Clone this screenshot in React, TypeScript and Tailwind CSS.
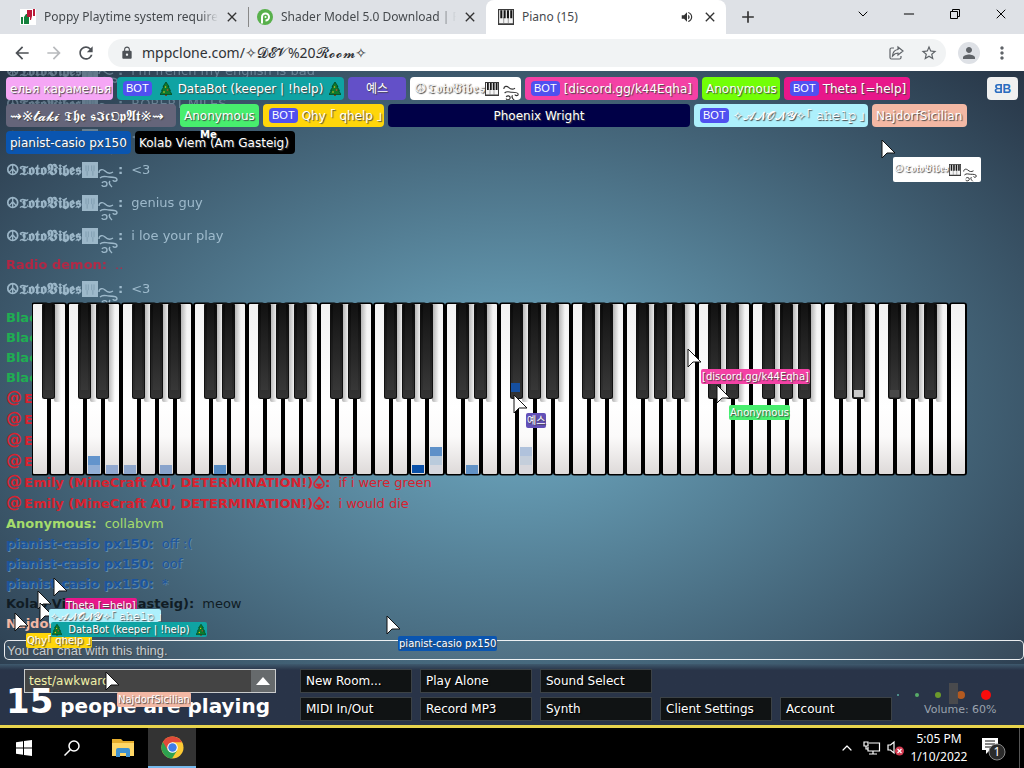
import React from "react";
import {
  MdArrowBack, MdArrowForward, MdRefresh, MdLock, MdStarBorder, MdPerson, MdMoreVert, MdVolumeUp, MdClose, MdAdd,
} from "react-icons/md";
import { ChevronDown, ChevronUp, Minus, X } from "lucide-react";

const shadow = "[text-shadow:1px_1px_1px_#444]";

function Tree({ className }: { className: string }) {
  return (
    <svg viewBox="0 0 12 14" className={className} aria-hidden="true">
      <path d="M5 12h2v2H5z" fill="#7a4318" />
      <path d="M6 0 9 4.500 8 4.500 10.500 8.500 9.500 8.500 12 12.500H0L2.500 8.500h-1L4 4.500H3z" fill="#0d7a2c" stroke="#053d17" strokeWidth=".7" />
      <circle cx="5.500" cy="5" r=".8" fill="#f2c418" />
      <circle cx="7.500" cy="8" r=".8" fill="#e43e2b" />
      <circle cx="4" cy="10" r=".8" fill="#f2c418" />
    </svg>
  );
}

function MiniPiano({ className, soft }: { className: string; soft?: boolean }) {
  return soft ? (
    <svg viewBox="0 0 14 14" className={className} aria-hidden="true">
      <path d="M0 0h14v14H0z" fill="#b4cfe0" />
      <path d="M3.500 3v5M5.500 3v5M8.500 3v5M10.500 3v5M4.500 8v4M9.500 8v4" stroke="#8fadc0" strokeWidth=".8" />
    </svg>
  ) : (
    <svg viewBox="0 0 14 14" className={className} aria-hidden="true">
      <rect width="14" height="14" fill="#3a3a3a" />
      <path d="M1 1h12v11.500H1z" fill="#f4f4f4" />
      <path d="M5 7v6M9 7v6" stroke="#777" strokeWidth=".6" />
      <path d="M2 1h1.800v7H2zM4.900 1h1.800v7H4.900zM7.800 1h1.800v7H7.800zM10.700 1h1.800v7h-1.800z" fill="#161616" />
    </svg>
  );
}

function Flourish({ className }: { className: string }) {
  return (
    <svg viewBox="0 0 20 20" className={className} fill="none" stroke="currentColor" strokeWidth="1.400" aria-hidden="true">
      <path d="M1 5c0-4 4-4 6-2 2 2 5 3 8 1M2 10c3-3 6-1 9-1 4 0 8 0 8 2.500s-4 2-4 .5M4 15c1-2 5-2 5 1s-5 3-5 1M12 13c-2 2 0 4 2 6" />
    </svg>
  );
}

function Vibes() {
  return (
    <span className="inline-flex items-center text-[#f4f4f4]">
      <span className="font-serif text-sm">☮𝕿𝖔𝖙𝖔𝖁𝖎𝖇𝖊𝖘</span>
      <MiniPiano className="size-3.5" />
      <Flourish className="mt-2 ml-1 size-4 text-[#333]" />
    </span>
  );
}

function VibesTag() {
  return (
    <span className="inline-flex items-center">
      <span className="font-serif text-[11px]">☮𝕿𝖔𝖙𝖔𝖁𝖎𝖇𝖊𝖘</span>
      <MiniPiano className="size-3" />
      <Flourish className="mt-2.5 ml-0.5 size-3.5 text-[#333]" />
    </span>
  );
}

function VibesChat() {
  return (
    <span className="inline-flex h-5 items-start align-top">
      <span className="font-serif text-[15px] leading-5">☮𝕿𝖔𝖙𝖔𝖁𝖎𝖇𝖊𝖘</span>
      <MiniPiano soft className="mt-0.5 size-4" />
      <Flourish className="mt-2 size-5" />
    </span>
  );
}

function Bot() {
  return (
    <span className="mr-0.5 ml-0.5 inline-block rounded-sm bg-[#5050f0] px-[3px] font-['Liberation_Sans',sans-serif] text-[11px] leading-[15px] [text-shadow:none]">
      BOT
    </span>
  );
}

const people: { look: string; bot?: boolean; name: React.ReactNode }[] = [
  { look: "w-[107px] bg-[#f5a6f5]", name: "елья карамелья" },
  {
    look: "w-[227px] bg-[#0fa3a3]", bot: true,
    name: <span className="flex items-center gap-1.5 pl-1"><Tree className="h-3.5 w-3" />DataBot (keeper | !help)<Tree className="h-3.5 w-3" /></span>,
  },
  { look: "w-[58px] bg-[#6350c8] justify-center", name: "예스" },
  { look: "w-[111px] bg-white", name: <Vibes /> },
  { look: "w-[173px] bg-[#f441a5]", bot: true, name: "[discord.gg/k44Eqha]" },
  { look: "w-[78px] bg-[#72ff06]", name: "Anonymous" },
  { look: "w-[126px] bg-[#e8178a]", bot: true, name: "Theta [=help]" },
  { look: "w-[170px] bg-[#65657a]", name: <span className="text-sm">⇝※𝓽𝓪𝓴𝓲 𝕿𝖍𝖊 𝖘𝕴𝖈𝕺𝖕𝕬𝖙※⇝</span> },
  { look: "w-[79px] bg-[#48ee6e]", name: "Anonymous" },
  { look: "w-[121px] bg-[#ffd60a]", bot: true, name: "Qhy ｢ qhelp ｣" },
  { look: "w-[302px] bg-[#000047] justify-center", name: "Phoenix Wright" },
  { look: "w-[174px] bg-[#adf0fc]", bot: true, name: "✧𝓐𝓝𝓞𝓝𝓨✧｢ 𝚊𝚑𝚎𝚕𝚙 ｣" },
  { look: "w-[95px] bg-[#f3b8a4]", name: "NajdorfSicilian" },
  { look: "w-[125px] bg-[#0a55b0]", name: "pianist-casio px150" },
  { look: "w-[160px] bg-black", name: "Kolab Viem (Am Gasteig)" },
];

function Flame() {
  return (
    <svg viewBox="0 0 12 14" className="inline h-3.5 w-3 align-[-2px]" fill="none" stroke="currentColor" strokeWidth="1.500" aria-hidden="true">
      <path d="M6 1c0 3-5 5-5 8a5 4 0 0 0 10 0C11 6 7 4 6 1z" />
      <path d="M4 9.500h4L6 12z" fill="currentColor" />
    </svg>
  );
}

const vibe = "h-[33px] pt-1 text-[#b4cfe0] opacity-80";
const oldVibe = "h-[33px] pt-1 text-[#b4cfe0] opacity-40";
const emily = "h-[21px] text-[#d8222f]";
const emilyName = <><span className="inline-block w-[18px] text-base leading-5">@</span>Emily (MineCraft AU, DETERMINATION!)<Flame /></>;
const pianist = "h-5 text-[#1c559c] [text-shadow:1px_1px_0_#6089ac]";
const green = "h-5 text-[#1fae52]";
const chat: { look: string; name: React.ReactNode; text: string }[] = [
  { look: oldVibe, name: <VibesChat />, text: "i'm french my english is bad" },
  { look: oldVibe, name: <VibesChat />, text: "ROBERT MILES" },
  { look: oldVibe, name: <VibesChat />, text: "<3" },
  { look: vibe, name: <VibesChat />, text: "<3" },
  { look: vibe, name: <VibesChat />, text: "genius guy" },
  { look: vibe, name: <VibesChat />, text: "i loe your play" },
  { look: "h-5 text-[#d01c3c] opacity-80", name: "Radio demon", text: ".." },
  { look: vibe, name: <VibesChat />, text: "<3" },
  { look: green, name: "Black", text: "" },
  { look: green, name: "Black", text: "" },
  { look: green, name: "Black", text: "" },
  { look: green, name: "Black", text: "" },
  { look: emily, name: emilyName, text: "" },
  { look: emily, name: emilyName, text: "" },
  { look: emily, name: emilyName, text: "" },
  { look: emily, name: emilyName, text: "" },
  { look: emily, name: emilyName, text: "if i were green" },
  { look: emily, name: emilyName, text: "i would die" },
  { look: "h-5 text-[#a5dc6c]", name: "Anonymous", text: "collabvm" },
  { look: pianist, name: "pianist-casio px150", text: "off :(" },
  { look: pianist, name: "pianist-casio px150", text: "oof" },
  { look: pianist, name: "pianist-casio px150", text: "*" },
  { look: "h-5 text-[#101c24]", name: "Kolab Viem (Am Gasteig)", text: "meow" },
  { look: "h-5 text-[#f3b8a4]", name: "NajdorfSicilian", text: "" },
];

const WHITE = Array.from({ length: 52 }, (_, i) => i);
const BLACK = WHITE.filter((i) => i < 51 && [0, 2, 3, 5, 6].includes(i % 7));
const notes: [number, number, string][] = [
  [3, 154, "#6394cc"], [3, 163, "#92afd6"], [4, 163, "#92a8cf"], [5, 163, "#8ea6cc"], [7, 163, "#8aa4cc"],
  [10, 163, "#5489c2"], [22, 145, "#5e90c8"], [22, 154, "#bacbdc"], [22, 163, "#d6d8df"], [24, 163, "#6292c6"],
  [27, 145, "#b0c2dc"], [27, 154, "#c4cedb"], [27, 163, "#d8d7dc"],
];

function Piano() {
  return (
    <svg viewBox="0 0 936 174" className="w-full" role="img" aria-label="Piano keyboard">
      <defs>
        <linearGradient id="ivory" x1="0" y1="0" x2="0" y2="1">
          <stop offset="0" stopColor="#f2f2f2" /><stop offset=".3" stopColor="#f9f9f9" />
          <stop offset=".6" stopColor="#fff" /><stop offset=".78" stopColor="#fbfafa" /><stop offset="1" stopColor="#dedad9" />
        </linearGradient>
        <linearGradient id="ebony" x1="0" y1="0" x2="0" y2="1">
          <stop offset="0" stopColor="#090909" /><stop offset="1" stopColor="#343434" />
        </linearGradient>
        <linearGradient id="shade">
          <stop offset="0" stopColor="#000" stopOpacity=".3" /><stop offset="1" stopColor="#000" stopOpacity="0" />
        </linearGradient>
      </defs>
      {WHITE.map((i) => (
        <g key={i}>
          <rect x={i * 18 - 1} y="0.500" width="18" height="173" rx="3" fill="#000" />
          <rect x={i * 18 + 1} y="2" width="14" height="170" rx="1" fill="url(#ivory)" />
        </g>
      ))}
      {notes.map(([k, y, c]) => <rect key={`${k}-${y}`} x={k * 18 + 2} y={y} width="12" height="9" fill={c} />)}
      <rect x="380" y="163" width="12" height="8" fill="#0a50a8" />
      {BLACK.map((i) => (
        <g key={i}>
          <rect x={i * 18 + 22} y="2" width="7" height="98" fill="url(#shade)" rx="2" />
          <rect x={i * 18 + 10} y="1" width="13" height="96" rx="2.500" fill="#111" />
          <rect x={i * 18 + 11} y="2" width="11" height="94" rx="2" fill="url(#ebony)" />
          <rect x={i * 18 + 13} y="2" width="7" height="86" fill="#fff" opacity=".035" />
        </g>
      ))}
      <rect x="479" y="81" width="9" height="9" fill="#154f9f" />
      <rect x="822" y="88" width="9" height="7" fill="#c9c9c9" />
      <rect x="858" y="88" width="9" height="7" fill="#484848" />
    </svg>
  );
}

const cursors = [
  "left-[881px] top-[139px]", "left-[687px] top-[348px]", "left-[716px] top-[384px]", "left-[513px] top-[394px]",
  "left-[386px] top-[615px]", "left-[105px] top-[671px]", "left-[53px] top-[577px]", "left-[37px] top-[590px]",
  "left-[39px] top-[602px]", "left-[14px] top-[612px]",
];

const tags: { look: string; name: React.ReactNode }[] = [
  { look: "left-[893px] top-[157px] h-[25px] w-[88px] overflow-hidden bg-white", name: <VibesTag /> },
  { look: "left-[701px] top-[369px] h-[15px] bg-[#f441a5]", name: "[discord.gg/k44Eqha]" },
  { look: "left-[729px] top-[405px] h-[15px] bg-[#48ee6e]", name: "Anonymous" },
  { look: "left-[526px] top-[413px] h-[15px] bg-[#6350b8]", name: "예스" },
  { look: "left-[398px] top-[636px] h-[15px] bg-[#0a55b0]", name: "pianist-casio px150" },
  { look: "left-[65px] top-[598px] h-[15px] bg-[#e8178a]", name: "Theta [=help]" },
  { look: "left-[26px] top-[633px] h-[15px] bg-[#ffd60a]", name: "Qhy｢ qhelp ｣" },
  { look: "left-[49px] top-[609px] h-[15px] w-[112px] bg-[#adf0fc]", name: "✧𝓐𝓝𝓞𝓝𝓨✧｢ 𝚊𝚑𝚎𝚕𝚙 ｣" },
  {
    look: "left-[51px] top-[622px] h-[15px] w-[156px] justify-between bg-[#0fa3a3]",
    name: <><Tree className="h-3 w-2.5" />DataBot (keeper | !help)<Tree className="h-3 w-2.5" /></>,
  },
  { look: "left-[117px] top-[692px] h-[15px] bg-[#f3b8a4]", name: "NajdorfSicilian" },
  { look: "left-[199px] top-[127px] h-[15px] font-bold", name: "Me" },
];

function Tab({ icon, title, last }: { icon: React.ReactNode; title: string; last?: boolean }) {
  return (
    <div className="flex min-w-0 flex-[0_1_237px] items-center px-2">
      {icon}
      <span className="ml-2 flex-1 overflow-hidden whitespace-nowrap text-[#45494d] [mask-image:linear-gradient(to_right,#000_90%,transparent)]">{title}</span>
      <button aria-label="Close tab" className="ml-1.5"><MdClose className="size-4 text-[#333]" /></button>
      {!last && <span className="ml-2 -mr-2 h-5 w-px bg-[#888]" />}
    </div>
  );
}

function Browser() {
  return (
    <header className="font-['Noto_Sans','Open_Sans',sans-serif] text-xs">
      <div className="flex h-[34px] items-stretch bg-[#dee1e6] pl-3">
        <Tab
          title="Poppy Playtime system requirements"
          icon={
            <svg viewBox="0 0 16 16" className="size-4 shrink-0">
              <path d="M0 0h16v16H0z" fill="#fff" />
              <path d="M1 8h2v7H1zM4 8l2-3h1v3h2v7H4z" fill="#14803c" />
              <path d="M13 0h2v7h-2zM12 7l-1 4h-1V8H7V1h5z" fill="#bb1838" />
            </svg>
          }
        />
        <Tab
          last
          title="Shader Model 5.0 Download | PeaZip"
          icon={
            <svg viewBox="0 0 16 16" className="size-4 shrink-0">
              <circle cx="8" cy="8" r="8" fill="#58b04c" />
              <path d="M5 14.500V8a3.500 3.500 0 1 1 3.500 3.500" fill="none" stroke="#fff" strokeWidth="2" />
              <circle cx="8.500" cy="8" r="1" fill="#fff" />
            </svg>
          }
        />
        <div className="flex min-w-0 flex-[0_1_240px] items-center rounded-t-lg bg-white px-2 pl-3">
          <MiniPiano className="size-4" />
          <span className="ml-2 flex-1 text-[#45494d]">Piano (15)</span>
          <MdVolumeUp className="size-3.5 text-[#333]" />
          <button aria-label="Close tab" className="ml-2"><MdClose className="size-4 text-[#333]" /></button>
        </div>
        <button aria-label="New tab" className="ml-3"><MdAdd className="size-5 text-[#333]" /></button>
        <div className="ml-auto flex items-center gap-[30px] pr-[15px] pb-1.5 text-black">
          <button aria-label="Search tabs"><ChevronDown className="size-4" strokeWidth={1.5} /></button>
          <button aria-label="Minimize"><Minus className="size-4" strokeWidth={1.5} /></button>
          <button aria-label="Restore">
            <svg viewBox="0 0 16 16" className="size-4" fill="none" stroke="#000"><path d="M3.500 5.500h7v7h-7zM5.500 5V3.500h7v7H11" /></svg>
          </button>
          <button aria-label="Close"><X className="size-4" strokeWidth={1.5} /></button>
        </div>
      </div>
      <div className="flex h-[37px] items-center bg-white pr-3 pl-3">
        <button aria-label="Back"><MdArrowBack className="size-5 text-[#4d5156]" /></button>
        <button aria-label="Forward" className="ml-3"><MdArrowForward className="size-5 text-[#b8babd]" /></button>
        <button aria-label="Reload" className="ml-3"><MdRefresh className="size-5 text-[#4d5156]" /></button>
        <div className="ml-3 flex h-7 flex-1 items-center rounded-full bg-[#f1f3f4] pr-2 pl-3">
          <MdLock className="size-3.5 text-[#4d5156]" />
          <input
            aria-label="Address"
            defaultValue="mppclone.com/✧𝓓𝓔𝓥%20𝓡𝓸𝓸𝓶✧"
            className="ml-2 flex-1 bg-transparent text-sm text-[#303236] outline-none"
          />
          <button aria-label="Share">
            <svg viewBox="0 0 16 16" className="size-4" fill="none" stroke="#5f6368" strokeWidth="1.200">
              <path d="M6 3H3.500Q2 3 2 4.500v8Q2 14 3.500 14h8q1.500 0 1.500-1.500V11" />
              <path d="M10 2l5 4-5 4V8Q7 8 4.500 11 5 5 10 4.500z" />
            </svg>
          </button>
          <button aria-label="Bookmark" className="ml-4"><MdStarBorder className="size-[18px] text-[#5f6368]" /></button>
        </div>
        <button aria-label="Profile" className="ml-3 flex size-[22px] items-center justify-center rounded-full bg-[#dee1e6]">
          <MdPerson className="size-[18px] text-[#5f6368]" />
        </button>
        <button aria-label="Menu" className="ml-3"><MdMoreVert className="size-5 text-[#5f6368]" /></button>
      </div>
    </header>
  );
}

const actions: [string, string][] = [
  ["New Room...", ""], ["Play Alone", ""], ["Sound Select", ""], ["MIDI In/Out", "col-start-1"],
  ["Record MP3", ""], ["Synth", ""], ["Client Settings", ""], ["Account", ""],
];

function BottomBar() {
  return (
    <footer className="flex h-16 border-b-[3px] border-[#e8d44d] bg-linear-to-b from-[#3f5a6e] from-0% to-[#293448] to-10% pt-[5px] text-xs text-white">
      <div className="w-[300px] shrink-0">
        <button aria-haspopup="listbox" className="ml-6 flex h-6 w-[252px] items-center border border-[#c9cbcc] bg-[#444] pl-1 text-[#f0f0a8]">
          <span className="flex-1 text-left">test/awkward</span>
          <span className="flex h-full w-6 items-center justify-center bg-[#666a6c]">
            <svg viewBox="0 0 14 8" className="h-2 w-3.5"><path d="M0 8 7 0l7 8z" fill="#fff" /></svg>
          </span>
        </button>
        <p className="-mt-2 h-8 pl-1.5 text-xl leading-8 font-bold whitespace-nowrap">
          <span className="text-[34px]">15</span> people are playing
        </p>
      </div>
      <div className="grid grid-cols-[repeat(5,112px)] content-start gap-x-2 gap-y-1">
        {actions.map(([label, place]) => (
          <button key={label} className={`h-6 border border-[#3c4246] bg-[#101314] pl-[5px] text-left [text-shadow:1px_1px_1px_#000] ${place}`}>{label}</button>
        ))}
      </div>
      <div className="flex flex-1 flex-col items-start pt-3.5 pl-0.5">
        <svg viewBox="0 0 100 24" className="h-6 w-[100px]" role="img" aria-label="Volume slider">
          <circle cx="4" cy="12" r="1" fill="#58a8a0" /><circle cx="23" cy="12" r="2" fill="#58ac68" />
          <circle cx="44" cy="12" r="3" fill="#6c9a2c" /><circle cx="67" cy="12" r="4" fill="#b35a20" />
          <circle cx="92" cy="12" r="5" fill="#fa0c0c" /><path d="M55 0h9v21h-9z" fill="#4c4c4e" opacity=".9" />
        </svg>
        <span className="-mt-1 ml-[30px] text-[11px] leading-[13px] whitespace-nowrap text-[#9aa3ae]">Volume: 60%</span>
      </div>
    </footer>
  );
}

function Taskbar() {
  return (
    <nav className="flex h-10 items-stretch bg-black font-['Noto_Sans','Open_Sans',sans-serif] text-xs text-white">
      <button aria-label="Start" className="flex w-12 items-center justify-center">
        <svg viewBox="0 0 16 16" className="size-4" fill="#fff"><path d="M0 2.200 7 1.200v6.300H0zM8 1l8-1v7.500H8zM0 8.500h7v6.300l-7-1zM8 8.500h8V16l-8-1z" /></svg>
      </button>
      <button aria-label="Search" className="flex w-12 items-center justify-center">
        <svg viewBox="0 0 16 16" className="size-4" fill="none" stroke="#fff" strokeWidth="1.500"><circle cx="10" cy="6" r="5" /><path d="m6.500 9.500-6 6" /></svg>
      </button>
      <button aria-label="File Explorer" className="ml-0.5 flex w-[50px] items-center justify-center">
        <svg viewBox="0 0 22 18" className="h-[18px] w-[22px]">
          <path d="M0 0h9l2 2h11v15H0z" fill="#e5ad2d" /><path d="M0 4h22v13H0z" fill="#ffd766" />
          <path d="M4 18V11q0-2 2-2h10q2 0 2 2v7h-4v-4H8v4z" fill="#3f91cf" />
        </svg>
      </button>
      <button aria-label="Chrome" className="flex w-12 items-center justify-center border-b-2 border-[#76b9ed] bg-[#333]">
        <svg viewBox="0 0 24 24" className="size-[23px]">
          <circle cx="12" cy="12" r="11.500" fill="#fcc934" />
          <path d="M12 12 2 6.300a11.500 11.500 0 0 0 9.500 17.200L16.800 15z" fill="#2da150" />
          <path d="M12 6.500h10A11.500 11.500 0 0 0 2 6.300L7.200 15z" fill="#e04a3a" />
          <circle cx="12" cy="12" r="5.500" fill="#fff" /><circle cx="12" cy="12" r="4.400" fill="#3f7de8" />
        </svg>
      </button>
      <div className="ml-auto flex items-center">
        <ChevronUp className="size-4" strokeWidth={1.8} />
        <svg viewBox="0 0 18 16" className="ml-2 h-4 w-[18px]" fill="none" stroke="#fff" strokeWidth="1.200"><path d="M6 3h10.500v8H5V7M1 2h4v4H1zM3 6v3h2M10 11v3M6 14h8" /></svg>
        <svg viewBox="0 0 18 16" className="ml-1.5 h-4 w-[18px]" fill="none" stroke="#fff" strokeWidth="1.200">
          <path d="M1 5h2.500L7 2v11L3.500 10H1z" /><circle cx="12.500" cy="11" r="4.500" fill="#d33a50" stroke="none" /><path d="m10.500 9 4 4m0-4-4 4" />
        </svg>
        <div className="w-[68px] text-center leading-[18px]"><div>5:05 PM</div><div>1/10/2022</div></div>
        <svg viewBox="0 0 26 26" className="ml-2 size-[26px]">
          <path d="M1 3h16v12H9l-4 4v-4H1z" fill="#fff" /><path d="M4 6h10M4 9h10M4 12h6" stroke="#111" />
          <circle cx="16" cy="17" r="8" fill="#2b2b2b" stroke="#888" /><text x="16" y="21" fontSize="12" textAnchor="middle" fill="#fff">1</text>
        </svg>
        <span className="mr-1 ml-3 h-full w-px bg-[#555]" />
      </div>
    </nav>
  );
}

export default function App() {
  return (
    <div className="relative flex min-h-screen flex-col overflow-hidden font-['DejaVu_Sans','Noto_Sans_CJK_KR',sans-serif]">
      <Browser />
      <div className="flex flex-1 flex-col bg-[radial-gradient(ellipse_at_center,#70adc6_0%,#273546_100%)]">
        <main className="relative flex flex-1 flex-col">
          <div className="absolute inset-x-0 top-0 bottom-[30px] flex flex-col justify-end overflow-hidden pl-1.5 text-[13px] leading-5">
            {chat.map((m, i) => (
              <p key={i} className={`shrink-0 whitespace-nowrap ${m.look}`}>
                <b>{m.name}:</b>
                <span className="ml-2">{m.text}</span>
              </p>
            ))}
          </div>
          <div className="relative flex items-start justify-between pt-1.5 pr-1.5 pl-1.5">
            <div className="flex max-w-[968px] flex-1 flex-wrap gap-1">
              {people.map((p, i) => (
                <div key={i} className={`flex h-[23px] items-center overflow-hidden rounded-sm px-1 text-xs whitespace-nowrap text-white ${shadow} ${p.look}`}>
                  {p.bot && <Bot />}
                  <span className={p.bot ? "pl-0.5" : ""}>{p.name}</span>
                </div>
              ))}
            </div>
            <button className="h-[23px] w-[31px] rounded-sm bg-[#f0f0f0] font-['Liberation_Sans',sans-serif] text-xs font-bold text-[#2a6cc0]">
              <span className="inline-block -scale-x-100">B</span>B
            </button>
          </div>
          <div className="relative flex flex-1 items-center pr-14 pb-4 pl-8"><Piano /></div>
          <div className="relative pb-1 pl-1">
            <input
              aria-label="Chat message"
              placeholder="You can chat with this thing."
              className="block h-5 w-full rounded-[5px] border border-white/90 bg-white/5 px-0.5 font-['Liberation_Sans',sans-serif] text-[13px] outline-none placeholder:text-[#c4ccd2] placeholder:[text-shadow:1px_1px_1px_#444]"
            />
          </div>
        </main>
        <BottomBar />
      </div>
      <Taskbar />
      {cursors.map((c) => (
        <svg key={c} viewBox="0 0 15 21" className={`absolute h-[21px] w-[15px] ${c}`} aria-hidden="true">
          <path d="M1 1v18l5-5h8z" fill="#fff" stroke="#111" />
        </svg>
      ))}
      {tags.map((t, i) => (
        <div key={i} className={`absolute flex items-center rounded-xs px-px text-[10px] whitespace-nowrap text-white [text-shadow:1px_1px_1px_#444] ${t.look}`}>{t.name}</div>
      ))}
    </div>
  );
}
